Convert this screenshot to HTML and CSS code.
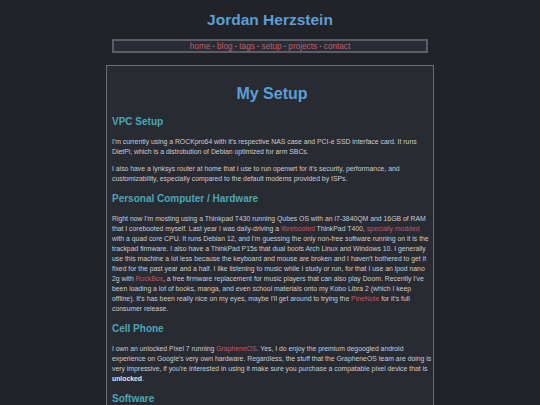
FILE: index.html
```html
<!DOCTYPE html>
<html lang="en">
<head>
<meta charset="utf-8">
<title>My Setup - Jordan Herzstein</title>
<link rel="stylesheet" href="styles.css">
</head>
<body>
<div class="page">
  <header class="site-header">
    <h1 class="site-title">Jordan Herzstein</h1>
    <nav class="site-nav">
      <a href="#">home</a><span class="sep">•</span><a href="#">blog</a><span class="sep">•</span><a href="#">tags</a><span class="sep">•</span><a href="#">setup</a><span class="sep">•</span><a href="#">projects</a><span class="sep">•</span><a href="#">contact</a>
    </nav>
  </header>
  <main class="content">
    <h1 class="page-title">My Setup</h1>
    <h2 class="section">VPC Setup</h2>
    <p>I'm currently using a ROCKpro64 with it's respective NAS case and PCI-e SSD interface card. It runs DietPi, which is a distrobution of Debian optimized for arm SBCs.</p>
    <p>I also have a lynksys router at home that I use to run openwrt for it's security, performance, and customizability, especially compared to the default modems provided by ISPs.</p>
    <h2 class="section">Personal Computer / Hardware</h2>
    <p>Right now I'm mosting using a Thinkpad T430 running Qubes OS with an i7-3840QM and 16GB of RAM that I corebooted myself. Last year I was daily-driving a <a href="#">librebooted</a> ThinkPad T400, <a href="#">specially modded</a> with a quad core CPU. It runs Debian 12, and I'm guessing the only non-free software running on it is the trackpad firmware. I also have a ThinkPad P15s that dual boots Arch Linux and Windows 10. I generally use this machine a lot less because the keyboard and mouse are broken and I haven't bothered to get it fixed for the past year and a half. I like listening to music while I study or run, for that I use an ipod nano 2g with <a href="#">RockBox</a>, a free firmware replacement for music players that can also play Doom. Recently I've been loading a lot of books, manga, and even school materials onto my Kobo Libra 2 (which I keep offline). It's has been really nice on my eyes, maybe I'll get around to trying the <a href="#">PineNote</a> for it's full consumer release.</p>
    <h2 class="section">Cell Phone</h2>
    <p>I own an unlocked Pixel 7 running <a href="#">GrapheneOS</a>. Yes, I do enjoy the premium degoogled android experience on Google's very own hardware. Regardless, the stuff that the GrapheneOS team are doing is very impressive, if you're interested in using it make sure you purchase a compatable pixel device that is <strong>unlocked</strong>.</p>
    <h2 class="section">Software</h2>
    <p>I use a variety of free software on a daily basis.</p>
  </main>
</div>
</body>
</html>
```
FILE: styles.css
```css
html, body {
  margin: 0;
  padding: 0;
}
body {
  background: #212328;
  color: #cbccd0;
  font-family: "Liberation Sans", Arial, sans-serif;
  font-size: 6.85px;
  line-height: 10px;
  overflow: hidden;
  height: 405px;
}
.page {
  width: 328px;
  margin: 0 auto;
}
.site-header {
  padding-top: 10px;
}
.site-title {
  margin: 0;
  text-align: center;
  color: #5a9fd7;
  font-size: 15.5px;
  line-height: 19px;
  font-weight: bold;
}
.site-nav {
  margin: 10px 6px 0;
  border: 2px solid #5b5e66;
  background: #2a2c35;
  text-align: center;
  height: 10px;
  line-height: 10px;
  font-size: 8.2px;
}
.site-nav a {
  color: #c45a66;
  text-decoration: none;
}
.sep {
  color: #8a8c92;
  font-size: 5px;
  margin: 0 2.5px;
  vertical-align: 1px;
}
.content {
  margin-top: 12px;
  border: 1px solid #6a6d74;
  background: #292b33;
  padding: 17.5px 1px 20px 5px;
  min-height: 400px;
}
.page-title {
  margin: 0 0 13px;
  text-align: center;
  color: #5a9fd7;
  font-size: 16px;
  line-height: 19px;
}
.section {
  margin: 9px 0 9px;
  color: #4ca6b6;
  font-size: 10px;
  line-height: 12px;
}
.page-title + .section {
  margin-top: 0;
}
p {
  margin: 0 0 7px;
}
.content a {
  color: #c95561;
  text-decoration: none;
}
strong {
  color: #e2e3e5;
}
```
